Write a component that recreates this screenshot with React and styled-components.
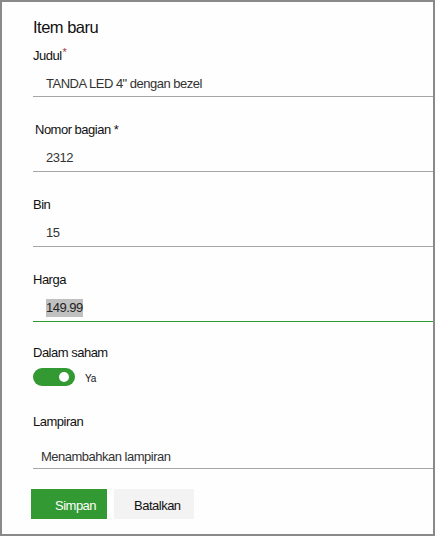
import React from "react";
import styled, { createGlobalStyle } from "styled-components";

const Global = createGlobalStyle`
  html, body { margin: 0; padding: 0; background: #ffffff; }
  body { font-family: "Liberation Sans", Arial, sans-serif; }
`;

const Panel = styled.div`
  box-sizing: border-box;
  width: 435px;
  height: 536px;
  border: 2px solid #8a8a8a;
  background: #fefefe;
  padding: 14px 0 0 31px;
  display: flex;
  flex-direction: column;
`;

const Title = styled.h1`
  margin: 0 0 10px 0;
  font-size: 16.5px;
  line-height: 22px;
  height: 22px;
  font-weight: 400;
  letter-spacing: -0.5px;
  color: #111;
`;

const Field = styled.div`
  display: flex;
  flex-direction: column;
  margin-top: ${(p) => p.$mt || 0}px;
`;

const Label = styled.div`
  font-size: 13px;
  line-height: 16px;
  height: 16px;
  letter-spacing: -0.5px;
  color: #111;
  padding-left: ${(p) => p.$indent || 0}px;
`;

const Star = styled.span`
  color: ${(p) => (p.$red ? "#a4373a" : "#111")};
  position: relative;
  top: ${(p) => (p.$red ? "-4px" : "0")};
  margin-left: ${(p) => (p.$red ? "1px" : "3px")};
  font-size: ${(p) => (p.$red ? "11px" : "13px")};
`;

const Value = styled.div`
  display: flex;
  align-items: center;
  margin-top: ${(p) => p.$gap || 12}px;
  padding: 0 0 ${(p) => p.$pb || 4}px ${(p) => p.$indent || 13}px;
  font-size: 13px;
  line-height: 16px;
  height: 16px;
  letter-spacing: -0.5px;
  color: #333;
  border-bottom: 1px solid ${(p) => (p.$active ? "#2e9a2e" : "#a6a6a6")};
`;

const Selected = styled.span`
  background: #c0c0c0;
  line-height: 18px;
  height: 18px;
  color: #222;
`;

const ToggleRow = styled.div`
  display: flex;
  align-items: center;
  gap: 10px;
  margin-top: 7px;
`;

const Track = styled.div`
  width: 42px;
  height: 18px;
  border-radius: 9px;
  background: #339933;
  display: flex;
  align-items: center;
  justify-content: flex-end;
  padding-right: 6px;
  box-sizing: border-box;
`;

const Knob = styled.div`
  width: 10px;
  height: 10px;
  border-radius: 50%;
  background: #ffffff;
`;

const Small = styled.span`
  font-size: 10px;
  letter-spacing: -0.3px;
  color: #111;
  padding-top: 2px;
`;

const Actions = styled.div`
  display: flex;
  gap: 7px;
  margin-top: 20px;
  margin-left: -2px;
`;

const Button = styled.button`
  box-sizing: border-box;
  height: 30px;
  width: ${(p) => p.$w}px;
  border: none;
  border-radius: 0;
  padding: 3px 0 0 ${(p) => p.$pl}px;
  text-align: left;
  font-family: "Liberation Sans", Arial, sans-serif;
  font-size: 13px;
  letter-spacing: -0.5px;
  background: ${(p) => (p.$primary ? "#339933" : "#f3f3f3")};
  color: ${(p) => (p.$primary ? "#ffffff" : "#111")};
`;

export default function App() {
  return (
    <>
      <Global />
      <Panel>
        <Title>Item baru</Title>
        <Field>
          <Label>
            Judul<Star $red>*</Star>
          </Label>
          <Value>TANDA LED 4" dengan bezel</Value>
        </Field>
        <Field $mt={25}>
          <Label $indent={2}>
            Nomor bagian<Star>*</Star>
          </Label>
          <Value $pb={5}>2312</Value>
        </Field>
        <Field $mt={25}>
          <Label>Bin</Label>
          <Value $pb={5}>15</Value>
        </Field>
        <Field $mt={25}>
          <Label>Harga</Label>
          <Value $active $pb={5}>
            <Selected>149.99</Selected>
          </Value>
        </Field>
        <Field $mt={23}>
          <Label>Dalam saham</Label>
          <ToggleRow>
            <Track>
              <Knob />
            </Track>
            <Small>Ya</Small>
          </ToggleRow>
        </Field>
        <Field $mt={28}>
          <Label>Lampiran</Label>
          <Value $gap={19} $indent={8} $pb={3}>
            Menambahkan lampiran
          </Value>
        </Field>
        <Actions>
          <Button $primary $w={76} $pl={24}>
            Simpan
          </Button>
          <Button $w={80} $pl={20}>
            Batalkan
          </Button>
        </Actions>
      </Panel>
    </>
  );
}
